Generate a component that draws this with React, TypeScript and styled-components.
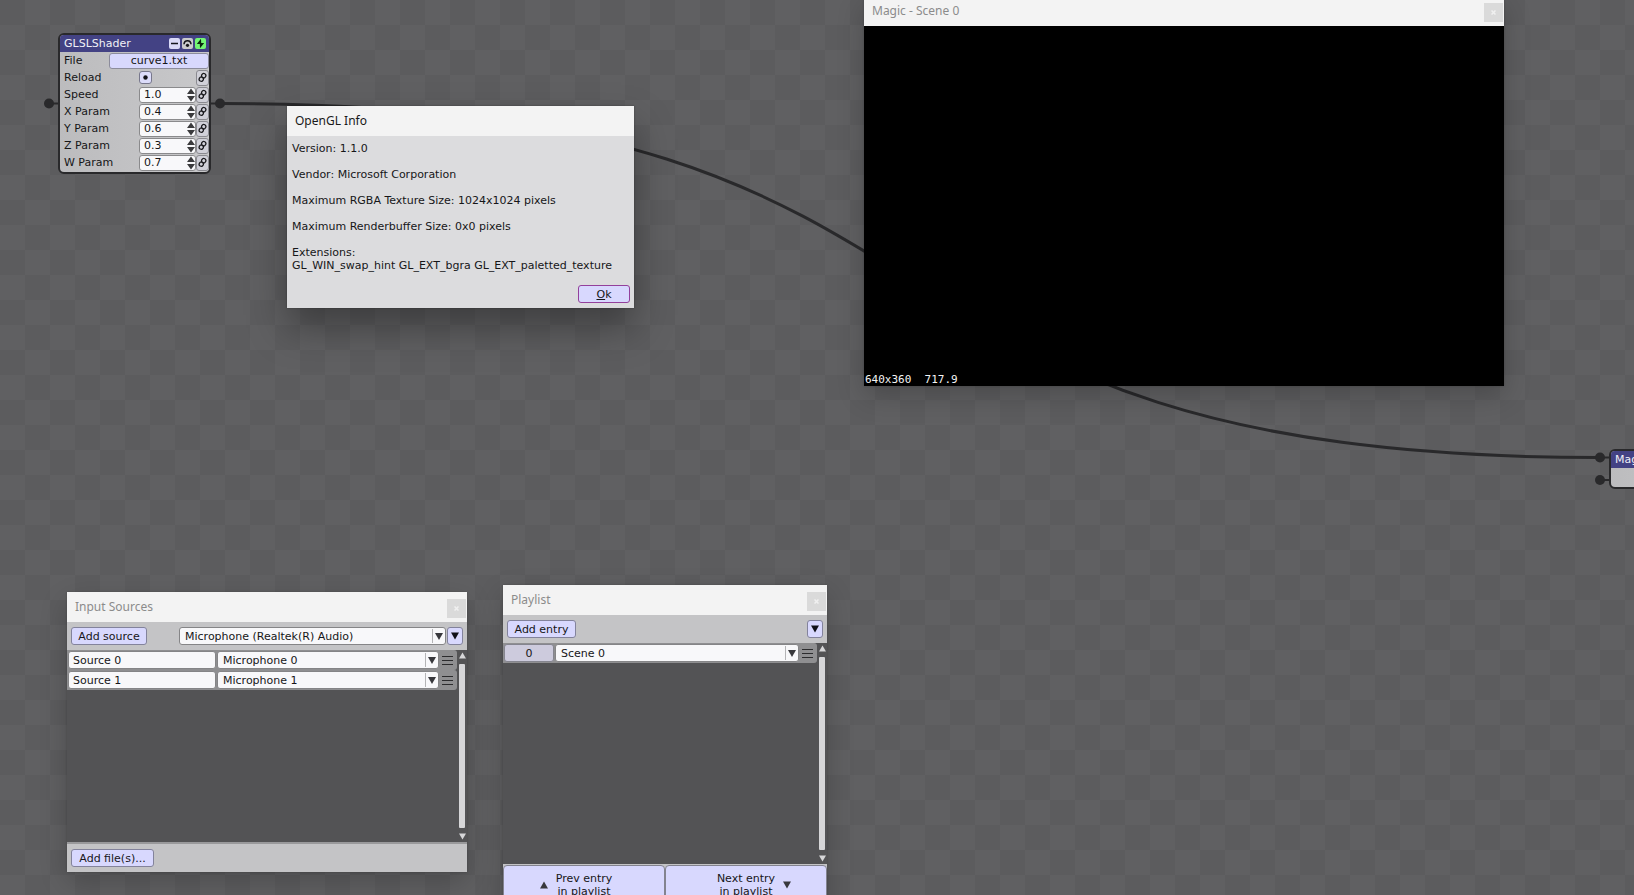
import React from "react";
import styled, { createGlobalStyle } from "styled-components";

const GlobalStyle = createGlobalStyle`
  * { box-sizing: border-box; }
  body { margin: 0; }
  button, input, select {
    font: inherit;
    color: inherit;
    margin: 0;
    padding: 0;
  }
`;

const Canvas = styled.main`
  position: relative;
  height: 100vh;
  overflow: hidden;
  background: repeating-conic-gradient(#606062 0 25%, #5c5c5e 0 50%) 0 0 / 50px 50px;
  font: 11px/13px "DejaVu Sans", Verdana, sans-serif;
  color: #161618;
`;

const Wires = styled.svg`
  position: absolute;
  inset: 0;
  width: 100%;
  height: 100%;
`;

/* Graph nodes */

const Node = styled.section<{ $x: number; $y: number; $width: number }>`
  position: absolute;
  left: ${(p) => p.$x}px;
  top: ${(p) => p.$y}px;
  width: ${(p) => p.$width}px;
  padding-bottom: 1px;
  border: 2px solid #29292b;
  border-radius: 6px;
  background: linear-gradient(90deg, #bcbcbe, #c8c8ca);
  overflow: hidden;
`;

const NodeHeader = styled.header`
  display: flex;
  align-items: center;
  gap: 2px;
  height: 17px;
  padding: 0 3px 0 4px;
  background: #434284;
  color: #f0f0f6;
`;

const NodeTitle = styled.h2`
  flex: 1;
  margin: 0;
  font: inherit;
`;

const NodeTool = styled.button<{ $tone: string }>`
  display: grid;
  place-items: center;
  width: 11px;
  height: 11px;
  border: 0;
  border-radius: 2px;
  background: ${(p) => p.$tone};
`;

const ParamRow = styled.div`
  display: flex;
  align-items: center;
  height: 17px;
  padding-left: 4px;
`;

const ParamLabel = styled.label<{ $width: number }>`
  width: ${(p) => p.$width}px;
`;

const FileButton = styled.button`
  flex: 1;
  height: 16px;
  border: 1px solid #8c8c9c;
  border-radius: 3px;
  background: #d8d8fd;
`;

const ReloadButton = styled.button`
  display: grid;
  place-items: center;
  width: 13px;
  height: 13px;
  margin-right: auto;
  border: 1px solid #77778c;
  border-radius: 3px;
  background: #dcdcfa;
`;

const SpinBox = styled.div`
  display: flex;
  align-items: center;
  flex: 1;
  height: 16px;
  border: 1px solid #8a8a8c;
  border-radius: 3px;
  background: #f8f8fa;
  overflow: hidden;
`;

const SpinInput = styled.input`
  flex: 1;
  min-width: 0;
  padding-left: 4px;
  border: 0;
  background: none;
  outline: 0;
`;

const LinkButton = styled.button`
  display: grid;
  place-items: center;
  width: 13px;
  height: 16px;
  border: 1px solid #8a8a90;
  border-radius: 3px;
  background: #d0d0d8;
`;

const Preview = styled.div`
  height: 18px;
`;

/* Floating windows */

const Window = styled.section<{ $x: number; $y: number; $width: number; $active?: boolean }>`
  position: absolute;
  left: ${(p) => p.$x}px;
  top: ${(p) => p.$y}px;
  width: ${(p) => p.$width}px;
  display: flex;
  flex-direction: column;
  background: ${(p) => (p.$active ? "#dcdcde" : "#c4c4c6")};
  box-shadow: ${(p) =>
    p.$active
      ? "0 20px 36px rgba(0,0,0,.34), 0 0 2px rgba(0,0,0,.3)"
      : "0 10px 26px rgba(0,0,0,.2), 0 0 2px rgba(0,0,0,.2)"};
`;

const TitleBar = styled.header<{ $active?: boolean }>`
  display: flex;
  align-items: center;
  justify-content: space-between;
  height: 30px;
  padding: 0 1px 0 8px;
  background: #f3f3f3;
  color: ${(p) => (p.$active ? "#191919" : "#8b8b8b")};
  font: 12px/16px "Noto Sans", "Segoe UI", sans-serif;
`;

const WindowTitle = styled.h2`
  margin: 0;
  font: inherit;
`;

const CloseButton = styled.button`
  display: grid;
  place-items: center;
  width: 19px;
  height: 19px;
  margin-top: 3px;
  border: 0;
  background: #dadada;
`;

const InfoBody = styled.div`
  display: flex;
  flex-direction: column;
  gap: 13px;
  padding: 6px 4px 5px 5px;
`;

const InfoLine = styled.p`
  margin: 0;
`;

const Button = styled.button<{ $width: number; $focused?: boolean }>`
  width: ${(p) => p.$width}px;
  height: 18px;
  border: 1px solid ${(p) => (p.$focused ? "#93409c" : "#83839c")};
  border-radius: 3px;
  background: #d8d8fe;
  display: grid;
  place-items: center;
`;

const OkButton = styled(Button)`
  align-self: flex-end;
`;

const Accel = styled.span`
  text-decoration: underline;
`;

const Viewport = styled.div`
  display: flex;
  align-items: flex-end;
  height: 360px;
  padding: 0 1px;
  background: #000;
  color: #f4f4f4;
  font: 11px/13px "DejaVu Sans Mono", monospace;
  white-space: pre;
`;

const Toolbar = styled.div`
  display: flex;
  align-items: center;
  justify-content: space-between;
  height: 28px;
  padding: 0 4px;
`;

const ToolGroup = styled.div`
  display: flex;
  gap: 1px;
`;

const SelectBox = styled.div<{ $width?: number }>`
  position: relative;
  display: flex;
  flex: ${(p) => (p.$width ? "none" : 1)};
  width: ${(p) => (p.$width ? `${p.$width}px` : "auto")};
`;

const Select = styled.select`
  appearance: none;
  width: 100%;
  height: 18px;
  padding: 0 20px 0 5px;
  border: 1px solid #858587;
  border-radius: 3px;
  background: #f8f8fa;
`;

const SelectArrow = styled.svg`
  position: absolute;
  right: 0;
  top: 2px;
  pointer-events: none;
`;

const ListArea = styled.div<{ $height: number }>`
  display: flex;
  height: ${(p) => p.$height}px;
  background: #535355;
`;

const Rows = styled.div`
  flex: 1;
`;

const Row = styled.div`
  display: flex;
  align-items: center;
  gap: 1px;
  height: 20px;
  padding: 0 2px 0 1px;
  border-radius: 0 3px 3px 0;
  background: #8f8f91;
`;

const NameInput = styled.input`
  width: 148px;
  height: 18px;
  padding: 0 4px;
  border: 1px solid #858587;
  border-radius: 3px;
  background: #f8f8fa;
`;

const IndexButton = styled.button`
  width: 50px;
  height: 18px;
  border: 1px solid #85858f;
  border-radius: 3px;
  background: #cdcbdd;
`;

const MenuButton = styled.button`
  display: grid;
  place-items: center;
  width: 15px;
  height: 18px;
  border: 0;
  background: none;
`;

const ScrollBar = styled.div`
  display: flex;
  flex-direction: column;
  align-items: center;
  gap: 5px;
  width: 10px;
  padding: 2px 1px 2px 1px;
`;

const Thumb = styled.div`
  flex: 1;
  width: 6px;
  border-radius: 1px;
  background: #d6d6d8;
`;

const Footer = styled.footer`
  display: flex;
  align-items: center;
  height: 30px;
  padding: 0 4px;
  border-top: 2px solid #99999b;
`;

const PagerBar = styled.footer`
  display: flex;
  padding: 1px 0 0;
`;

const PagerButton = styled.button<{ $arrow: "left" | "right" }>`
  display: flex;
  align-items: center;
  justify-content: center;
  gap: 8px;
  flex: 1;
  height: 40px;
  padding-left: ${(p) => (p.$arrow === "right" ? 16 : 0)}px;
  padding-right: ${(p) => (p.$arrow === "left" ? 16 : 0)}px;
  border: 1px solid #83838f;
  border-radius: 4px;
  background: #d8d8fe;
`;

const Chevron = ({ up, size = 8, tone = "#38383c" }: { up?: boolean; size?: number; tone?: string }) => (
  <svg width={size} height={size} viewBox="0 0 8 8" aria-hidden="true">
    <path d={up ? "M0 7.5 4 .5 8 7.5Z" : "M0 .5H8L4 7.5Z"} fill={tone} />
  </svg>
);

const LinkIcon = () => (
  <svg width="9" height="11" viewBox="0 0 9 11" fill="none" stroke="#18181c" strokeWidth="1.3" aria-hidden="true">
    <ellipse cx="5.7" cy="3.7" rx="2.1" ry="2.2" transform="rotate(30 5.7 3.7)" />
    <ellipse cx="3.3" cy="7.1" rx="2.1" ry="2.2" transform="rotate(30 3.3 7.1)" />
  </svg>
);

const MenuIcon = () => (
  <svg width="11" height="11" viewBox="0 0 11 11" stroke="#2c2c2e" aria-hidden="true">
    <path d="M0 1.5H11M0 5.5H11M0 9.5H11" />
  </svg>
);

const Close = () => (
  <CloseButton aria-label="Close">
    <svg width="5" height="5" viewBox="0 0 5 5" stroke="#f0f0f0" strokeWidth="1.5" aria-hidden="true">
      <path d="M.5 .5 4.5 4.5M4.5 .5 .5 4.5" />
    </svg>
  </CloseButton>
);

const Dropdown = ({ label, value, width }: { label: string; value: string; width?: number }) => (
  <SelectBox $width={width}>
    <Select aria-label={label} defaultValue={value}>
      <option>{value}</option>
    </Select>
    <SelectArrow width="14" height="14" viewBox="0 0 14 14" aria-hidden="true">
      <path d="M.5 0V14" stroke="#b4b4b6" />
      <path d="M3 4H11L7 11Z" fill="#38383c" />
    </SelectArrow>
  </SelectBox>
);

const Scroll = () => (
  <ScrollBar>
    <Chevron up size={7} tone="#d6d6d8" />
    <Thumb />
    <Chevron size={7} tone="#d6d6d8" />
  </ScrollBar>
);

const params: [string, string][] = [
  ["Speed", "1.0"],
  ["X Param", "0.4"],
  ["Y Param", "0.6"],
  ["Z Param", "0.3"],
  ["W Param", "0.7"],
];

const sources: [string, string][] = [
  ["Source 0", "Microphone 0"],
  ["Source 1", "Microphone 1"],
];

export default function App() {
  return (
    <>
      <GlobalStyle />
      <Canvas>
        <Wires aria-hidden="true">
          <path d="M220 103.500C1036 103.500 790 457.500 1600 457.500" fill="none" stroke="#29292b" strokeWidth="3" />
          <path d="M49 103.500H60M208 103.500H220M1600 457.500H1612M1600 480H1612" stroke="#29292b" strokeWidth="2" />
          <g fill="#29292b">
            <circle cx="49" cy="103.500" r="5" />
            <circle cx="220" cy="103.500" r="5" />
            <circle cx="1600" cy="457.500" r="5" />
            <circle cx="1600" cy="480" r="5" />
          </g>
        </Wires>

        <Node $x={58} $y={33} $width={153}>
          <NodeHeader>
            <NodeTitle>GLSLShader</NodeTitle>
            <NodeTool $tone="#dadaf8" aria-label="Collapse">
              <svg width="11" height="11" viewBox="0 0 11 11">
                <path d="M2 5.500H9" stroke="#16161e" strokeWidth="1.400" />
              </svg>
            </NodeTool>
            <NodeTool $tone="#cbcbcd" aria-label="Bypass">
              <svg width="11" height="11" viewBox="0 0 11 11">
                <path d="M2 6.200C2.300 1.500 8.700 1.500 9 6.200" fill="none" stroke="#16161a" strokeWidth="1.600" />
                <circle cx="5.500" cy="7.300" r="1.600" fill="#16161a" />
              </svg>
            </NodeTool>
            <NodeTool $tone="#74f674" aria-label="Active">
              <svg width="11" height="11" viewBox="0 0 11 11">
                <path d="M6 .8 1.800 6H4.800L5 10.200 9.200 5H6.200Z" fill="#0c280e" />
              </svg>
            </NodeTool>
          </NodeHeader>
          <ParamRow>
            <ParamLabel as="span" $width={45}>File</ParamLabel>
            <FileButton>curve1.txt</FileButton>
          </ParamRow>
          <ParamRow>
            <ParamLabel as="span" $width={75}>Reload</ParamLabel>
            <ReloadButton aria-label="Reload">
              <svg width="5" height="5" viewBox="0 0 5 5"><circle cx="2.500" cy="2.500" r="2.200" fill="#121218" /></svg>
            </ReloadButton>
            <LinkButton aria-label="Link Reload"><LinkIcon /></LinkButton>
          </ParamRow>
          {params.map(([name, value]) => (
            <ParamRow key={name}>
              <ParamLabel htmlFor={name} $width={75}>{name}</ParamLabel>
              <SpinBox>
                <SpinInput id={name} defaultValue={value} />
                <svg width="8" height="14" viewBox="0 0 8 14" aria-hidden="true">
                  <path d="M0 6 4 .5 8 6ZM0 8H8L4 13.500Z" fill="#3a3a3c" />
                </svg>
              </SpinBox>
              <LinkButton aria-label={`Link ${name}`}><LinkIcon /></LinkButton>
            </ParamRow>
          ))}
        </Node>

        <Node $x={1609} $y={449} $width={120}>
          <NodeHeader>
            <NodeTitle>Magic</NodeTitle>
          </NodeHeader>
          <Preview />
        </Node>

        <Window $x={864} $y={-4} $width={640}>
          <TitleBar>
            <WindowTitle>Magic - Scene 0</WindowTitle>
            <Close />
          </TitleBar>
          <Viewport>640x360  717.9</Viewport>
        </Window>

        <Window $x={67} $y={592} $width={400}>
          <TitleBar>
            <WindowTitle>Input Sources</WindowTitle>
            <Close />
          </TitleBar>
          <Toolbar>
            <Button $width={76}>Add source</Button>
            <ToolGroup>
              <Dropdown label="Input device" value="Microphone (Realtek(R) Audio)" width={267} />
              <Button $width={16} aria-label="Source options"><Chevron tone="#101018" /></Button>
            </ToolGroup>
          </Toolbar>
          <ListArea $height={192}>
            <Rows>
              {sources.map(([name, device]) => (
                <Row key={name}>
                  <NameInput aria-label="Source name" defaultValue={name} />
                  <Dropdown label={`${name} device`} value={device} />
                  <MenuButton aria-label={`${name} menu`}><MenuIcon /></MenuButton>
                </Row>
              ))}
            </Rows>
            <Scroll />
          </ListArea>
          <Footer>
            <Button $width={83}>Add file(s)...</Button>
          </Footer>
        </Window>

        <Window $x={503} $y={585} $width={324}>
          <TitleBar>
            <WindowTitle>Playlist</WindowTitle>
            <Close />
          </TitleBar>
          <Toolbar>
            <Button $width={69}>Add entry</Button>
            <Button $width={16} aria-label="Playlist options"><Chevron tone="#101018" /></Button>
          </Toolbar>
          <ListArea $height={221}>
            <Rows>
              <Row>
                <IndexButton>0</IndexButton>
                <Dropdown label="Scene" value="Scene 0" />
                <MenuButton aria-label="Entry menu"><MenuIcon /></MenuButton>
              </Row>
            </Rows>
            <Scroll />
          </ListArea>
          <PagerBar>
            <PagerButton $arrow="left">
              <Chevron up />
              <span>Prev entry<br />in playlist</span>
            </PagerButton>
            <PagerButton $arrow="right">
              <span>Next entry<br />in playlist</span>
              <Chevron />
            </PagerButton>
          </PagerBar>
        </Window>

        <Window $x={287} $y={106} $width={347} $active role="dialog" aria-label="OpenGL Info">
          <TitleBar $active>
            <WindowTitle>OpenGL Info</WindowTitle>
          </TitleBar>
          <InfoBody>
            <InfoLine>Version: 1.1.0</InfoLine>
            <InfoLine>Vendor: Microsoft Corporation</InfoLine>
            <InfoLine>Maximum RGBA Texture Size: 1024x1024 pixels</InfoLine>
            <InfoLine>Maximum Renderbuffer Size: 0x0 pixels</InfoLine>
            <InfoLine>Extensions:<br />GL_WIN_swap_hint GL_EXT_bgra GL_EXT_paletted_texture</InfoLine>
            <OkButton $width={52} $focused><span><Accel>O</Accel>k</span></OkButton>
          </InfoBody>
        </Window>
      </Canvas>
    </>
  );
}
